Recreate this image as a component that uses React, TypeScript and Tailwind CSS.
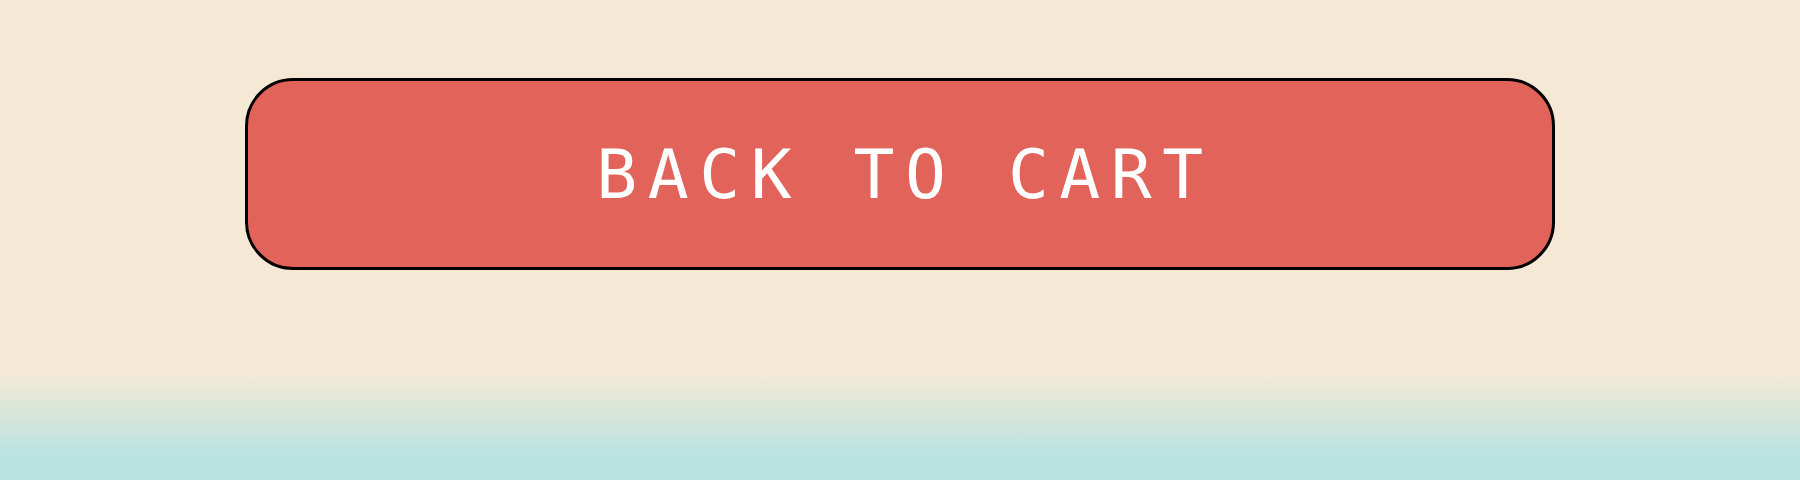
export default function App() {
  return (
    <div className="relative flex h-[480px] w-full flex-col bg-[#f5e9d5]">
      <div className="flex justify-center pt-[78px]">
        <button
          type="button"
          className="flex h-[192px] w-[1310px] items-center justify-center rounded-[48px] border-[3px] border-black bg-[#e2635a] pl-[10px] pt-[2px] text-[68px] leading-none tracking-[10.5px] text-white"
          style={{ fontFamily: '"DejaVu Sans Mono", "Liberation Mono", monospace' }}
        >
          BACK TO CART
        </button>
      </div>
      <div className="mt-auto h-[115px] w-full bg-gradient-to-b from-[#f5e9d5] from-5% to-[#b8e2e0] to-80%" />
    </div>
  );
}
